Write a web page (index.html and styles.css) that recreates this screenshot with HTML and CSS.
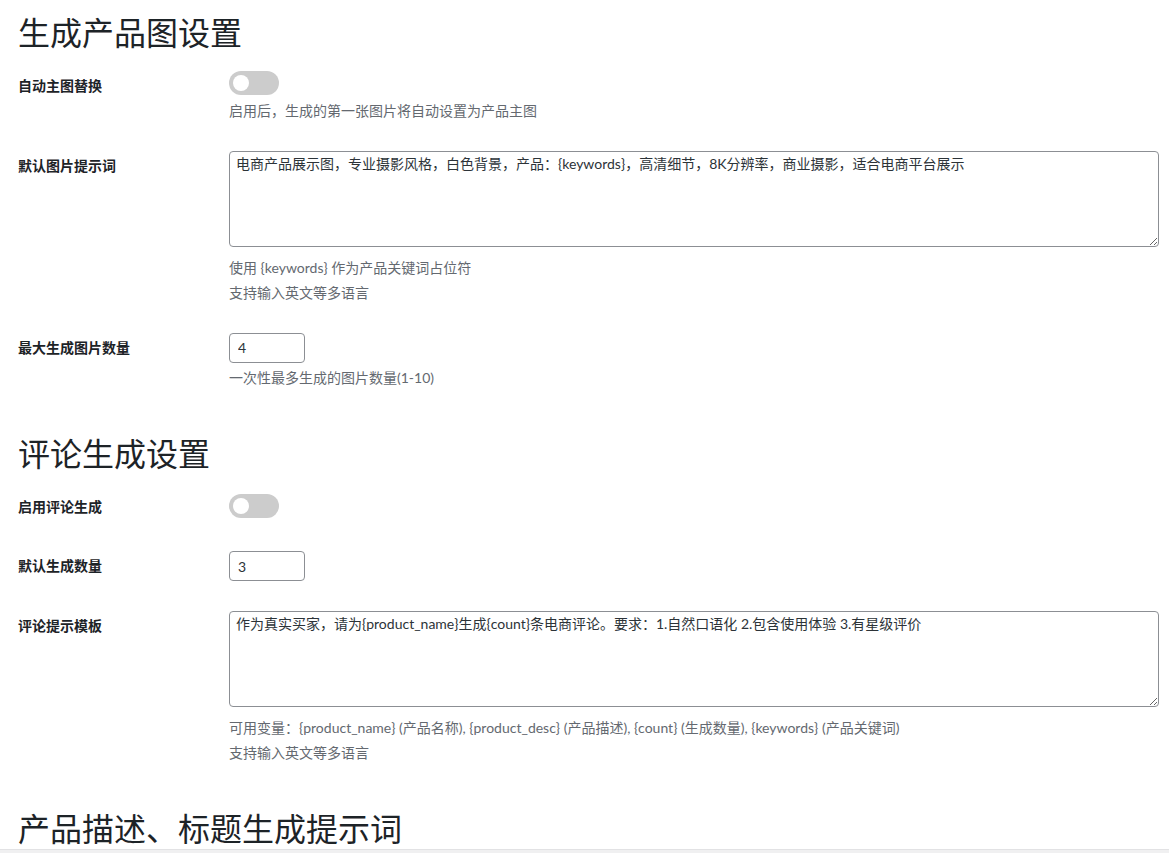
FILE: index.html
```html
<!DOCTYPE html>
<html lang="zh-CN">
<head>
<meta charset="utf-8">
<title>设置</title>
<link rel="stylesheet" href="styles.css">
</head>
<body>
<div class="wrap">
  <h2 class="section-title first">生成产品图设置</h2>
  <div class="form-table first-table">
    <div class="row">
      <div class="th"><label>自动主图替换</label></div>
      <div class="td">
        <label class="switch"><input type="checkbox"><span class="slider"></span></label>
        <p class="description">启用后，生成的第一张图片将自动设置为产品主图</p>
      </div>
    </div>
    <div class="row">
      <div class="th"><label>默认图片提示词</label></div>
      <div class="td">
        <textarea class="textarea">电商产品展示图，专业摄影风格，白色背景，产品：{keywords}，高清细节，8K分辨率，商业摄影，适合电商平台展示</textarea>
        <p class="description after-area">使用 {keywords} 作为产品关键词占位符</p>
        <p class="description">支持输入英文等多语言</p>
      </div>
    </div>
    <div class="row">
      <div class="th"><label>最大生成图片数量</label></div>
      <div class="td">
        <input class="number" type="number" value="4" min="1" max="10">
        <p class="description">一次性最多生成的图片数量(1-10)</p>
      </div>
    </div>
  </div>

  <h2 class="section-title">评论生成设置</h2>
  <div class="form-table">
    <div class="row">
      <div class="th"><label>启用评论生成</label></div>
      <div class="td td-switch">
        <label class="switch"><input type="checkbox"><span class="slider"></span></label>
      </div>
    </div>
    <div class="row">
      <div class="th"><label>默认生成数量</label></div>
      <div class="td">
        <input class="number" type="number" value="3">
      </div>
    </div>
    <div class="row">
      <div class="th"><label>评论提示模板</label></div>
      <div class="td">
        <textarea class="textarea">作为真实买家，请为{product_name}生成{count}条电商评论。要求：1.自然口语化 2.包含使用体验 3.有星级评价</textarea>
        <p class="description after-area">可用变量：{product_name} (产品名称), {product_desc} (产品描述), {count} (生成数量), {keywords} (产品关键词)</p>
        <p class="description">支持输入英文等多语言</p>
      </div>
    </div>
  </div>

  <h2 class="section-title">产品描述、标题生成提示词</h2>
</div>
<div class="bottom-bar"></div>
</body>
</html>
```

FILE: styles.css
```css
html, body {
  margin: 0;
  padding: 0;
  background: #ffffff;
}

body {
  font-family: "Lato", "Noto Sans CJK SC", sans-serif;
  color: #1d2327;
  font-size: 14px;
}

.wrap {
  padding: 0 10px 0 18px;
}

.section-title {
  margin: 30px 0 0;
  font-family: "Noto Sans CJK SC", sans-serif;
  font-size: 32px;
  line-height: 1.3;
  font-weight: 400;
  color: #1d2327;
}

.section-title.first {
  margin-top: 11px;
}

.form-table {
  margin-top: 4px;
}

.form-table.first-table {
  margin-top: 3px;
}

.form-table + .section-title {
  margin-top: 29px;
}

.row {
  display: grid;
  grid-template-columns: 211px 1fr;
}

.th {
  padding-top: 20px;
  font-family: "Noto Sans CJK SC", sans-serif;
  font-size: 14px;
  line-height: 18px;
  font-weight: 700;
  color: #1d2327;
}

.td {
  padding: 15px 0;
  min-width: 0;
}

.td-switch {
  padding: 17px 0;
}

.switch {
  position: relative;
  display: block;
  width: 50px;
  height: 25px;
}

.switch input {
  opacity: 0;
  width: 0;
  height: 0;
  margin: 0;
  position: absolute;
}

.slider {
  position: absolute;
  left: 0;
  top: 0;
  width: 50px;
  height: 24px;
  border-radius: 24px;
  background: #cccccc;
  cursor: pointer;
}

.slider::before {
  content: "";
  position: absolute;
  left: 4px;
  top: 4px;
  width: 16px;
  height: 16px;
  border-radius: 50%;
  background: #ffffff;
}

.description {
  margin: 4px 0 0;
  font-size: 14px;
  line-height: 21px;
  color: #646970;
}

.description.after-area {
  margin-top: 10px;
}

.textarea {
  display: block;
  box-sizing: border-box;
  width: 100%;
  height: 96px;
  margin: 0;
  padding: 2px 6px;
  border: 1px solid #8c8f94;
  border-radius: 4px;
  font-family: "Lato", "Noto Sans CJK SC", sans-serif;
  font-size: 14px;
  line-height: 1.42857;
  color: #2c3338;
  background: #fff;
}

.number {
  display: block;
  box-sizing: border-box;
  width: 76px;
  height: 30px;
  margin: 0;
  padding: 0 8px;
  border: 1px solid #8c8f94;
  border-radius: 4px;
  font-family: "Lato", "Noto Sans CJK SC", sans-serif;
  font-size: 14px;
  line-height: 2;
  color: #2c3338;
  background: #fff;
  -moz-appearance: textfield;
}

.number::-webkit-outer-spin-button,
.number::-webkit-inner-spin-button {
  -webkit-appearance: none;
  margin: 0;
}

.bottom-bar {
  height: 12px;
  background: #f0f0f1;
  border-top: 1px solid #e2e2e4;
}
```
